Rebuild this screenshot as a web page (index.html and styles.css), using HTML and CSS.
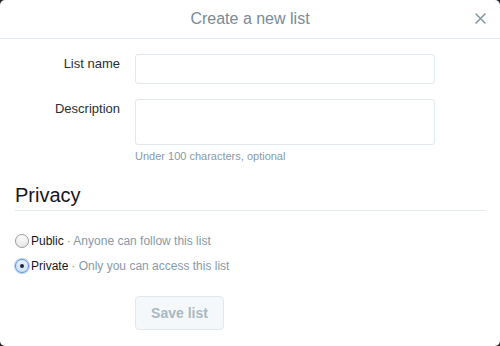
FILE: index.html
```html
<!DOCTYPE html>
<html lang="en">
<head>
    <meta charset="UTF-8">
    <meta name="viewport" content="width=device-width, initial-scale=1.0">
    <title>Create a new list</title>
    <link rel="stylesheet" href="styles.css">
</head>
<body>
    <div class="modal">
        <div class="modal-header">
            <h2 class="modal-title">Create a new list</h2>
            <button class="modal-close" aria-label="Close">
                <svg width="11" height="11" viewBox="0 0 11 11">
                    <path d="M1 1 L10 10 M10 1 L1 10" stroke="#8899a6" stroke-width="1.6" stroke-linecap="round"/>
                </svg>
            </button>
        </div>

        <form class="list-form">
            <!-- List name -->
            <div class="form-row">
                <label class="form-label" for="list-name">List name</label>
                <input class="form-input" id="list-name" type="text">
            </div>

            <!-- Description -->
            <div class="form-row">
                <label class="form-label" for="list-desc">Description</label>
                <div class="form-field">
                    <textarea class="form-input form-textarea" id="list-desc"></textarea>
                    <p class="form-hint">Under 100 characters, optional</p>
                </div>
            </div>

            <h3 class="section-title">Privacy</h3>

            <div class="radio-group">
                <label class="radio-row">
                    <span class="radio"></span>
                    <span class="radio-name">Public</span>
                    <span class="radio-desc">&middot; Anyone can follow this list</span>
                </label>
                <label class="radio-row">
                    <span class="radio checked"></span>
                    <span class="radio-name">Private</span>
                    <span class="radio-desc">&middot; Only you can access this list</span>
                </label>
            </div>

            <div class="form-actions">
                <button class="save-btn" type="button" disabled>Save list</button>
            </div>
        </form>
    </div>
</body>
</html>
```

FILE: styles.css
```css
body {
    margin: 0;
    background-color: #1f2326;
    font-family: "Liberation Sans", Arial, sans-serif;
}
.modal {
    width: 500px;
    height: 346px;
    background: white;
    border-radius: 5px;
    overflow: hidden;
}
.modal-header {
    position: relative;
    height: 38px;
    border-bottom: 1px solid #e1e8ed;
    display: flex;
    align-items: center;
    justify-content: center;
}
.modal-title {
    margin: 0;
    font-size: 16px;
    font-weight: normal;
    color: #7a8a96;
}
.modal-close {
    position: absolute;
    top: 13px;
    right: 14px;
    background: none;
    border: none;
    padding: 0;
    width: 11px;
    height: 11px;
    cursor: pointer;
}
.modal-close svg {
    display: block;
}
.list-form {
    padding: 15px 15px 0;
}
.form-row {
    display: flex;
    gap: 15px;
    margin-bottom: 15px;
}
.form-row:nth-child(2) {
    margin-bottom: 0;
}
.form-label {
    width: 105px;
    text-align: right;
    font-size: 13px;
    color: #292f33;
    padding-top: 2px;
}
.form-input {
    box-sizing: border-box;
    width: 300px;
    height: 30px;
    margin: 0;
    border: 1px solid #e1e8ed;
    border-radius: 3px;
    background: white;
    font-family: inherit;
    font-size: 14px;
}
.form-textarea {
    display: block;
    height: 46px;
    resize: none;
}
.form-hint {
    margin: 3px 0 0;
    font-size: 11px;
    line-height: 16px;
    color: #8899a6;
}
.section-title {
    margin: 19px 0 0;
    padding-bottom: 3px;
    font-size: 20px;
    line-height: 24px;
    font-weight: normal;
    color: #14171a;
    border-bottom: 1px solid #e1e8ed;
}
.radio-group {
    margin-top: 20px;
    display: flex;
    flex-direction: column;
    gap: 5px;
}
.radio-row {
    display: flex;
    align-items: center;
    height: 20px;
    font-size: 12px;
}
.radio {
    box-sizing: border-box;
    width: 14px;
    height: 14px;
    border-radius: 50%;
    border: 1px solid #9a9a9a;
    background: linear-gradient(#ffffff, #e6e6e6);
    margin-right: 2px;
    position: relative;
}
.radio.checked {
    border-color: #5b8fd6;
    background: linear-gradient(#e9f1fc, #cfe0f8);
    box-shadow: 0 0 0 1px #b7cff3;
}
.radio.checked::after {
    content: "";
    position: absolute;
    top: 4px;
    left: 4px;
    width: 4px;
    height: 4px;
    border-radius: 50%;
    background: #1b2a3a;
}
.radio-name {
    color: #14171a;
}
.radio-desc {
    color: #8899a6;
    margin-left: 3px;
}
.form-actions {
    margin-top: 20px;
    padding-left: 120px;
}
.save-btn {
    width: 89px;
    height: 34px;
    border: 1px solid #e1e8ed;
    border-radius: 4px;
    background-color: #f5f8fa;
    color: #aab8c2;
    font-family: inherit;
    font-size: 14px;
    font-weight: bold;
}
```
